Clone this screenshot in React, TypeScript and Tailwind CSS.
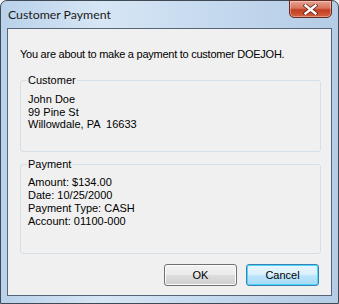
import React from "react";

export default function App() {
  const body = { fontFamily: '"Liberation Sans", Arial, sans-serif' };
  return (
    <div className="w-[339px] h-[304px] overflow-hidden bg-[#f0f0f0]">
      <div className="relative w-[339px] h-[304px] rounded-t-[7px] border border-[#3f4a55] bg-[linear-gradient(90deg,#b9d1ea_0%,#d7e6f5_30%,#c9dcf0_55%,#b4cce6_100%)] flex flex-col">
        {/* title bar */}
        <div className="h-[27px] flex items-center pl-[7px] pt-[2px]">
          <span
            className="text-[12.3px] text-[#1a1a1a] leading-none"
            style={{ fontFamily: 'Lato, "Noto Sans", sans-serif' }}
          >
            Customer Payment
          </span>
        </div>
        {/* close button */}
        <div className="absolute top-[-1px] right-[6px] w-[43px] h-[18px] rounded-b-[5px] border border-[#6b2a1f] bg-[linear-gradient(180deg,#e8a493_0%,#d8735e_45%,#c23e22_55%,#d4603e_100%)] flex items-center justify-center shadow-[inset_0_0_0_1px_rgba(255,255,255,0.35)]">
          <svg width="15" height="11" viewBox="0 0 15 11">
            <path
              d="M2.5 1.5 L12.5 9.5 M12.5 1.5 L2.5 9.5"
              stroke="#5a1a10"
              strokeWidth="3.8"
              strokeLinecap="square"
            />
            <path
              d="M2.5 1.5 L12.5 9.5 M12.5 1.5 L2.5 9.5"
              stroke="#ffffff"
              strokeWidth="2.4"
              strokeLinecap="square"
            />
          </svg>
        </div>
        {/* client area */}
        <div className="mx-[6px] h-[268px] border border-[#55667a] bg-[#f0f0f0] flex flex-col pl-[12px] pr-[10px] text-[11px] text-black" style={body}>
          <p className="mt-[19px] leading-[13px] tracking-[-0.25px]">
            You are about to make a payment to customer DOEJOH.
          </p>
          <fieldset className="mt-[13px] w-[301px] h-[78px] rounded-[3px] border border-[#d5dfe5] px-[7px]">
            <legend className="px-[1px] ml-[-1px] leading-[13px]">Customer</legend>
            <div className="pt-[6px] leading-[12.5px]">
              <div>John Doe</div>
              <div>99 Pine St</div>
              <div className="whitespace-pre">Willowdale, PA  16633</div>
            </div>
          </fieldset>
          <fieldset className="mt-[6px] w-[301px] h-[96px] rounded-[3px] border border-[#d5dfe5] px-[7px]">
            <legend className="px-[1px] ml-[-1px] leading-[13px]">Payment</legend>
            <div className="pt-[5px] leading-[13px]">
              <div>Amount: $134.00</div>
              <div>Date: 10/25/2000</div>
              <div>Payment Type: CASH</div>
              <div>Account: 01100-000</div>
            </div>
          </fieldset>
          <div className="mt-[10px] flex justify-end gap-[9px] pr-[2px]">
            <button className="w-[73px] h-[22px] rounded-[3px] border border-[#707070] bg-[linear-gradient(180deg,#f2f2f2_0%,#ebebeb_48%,#dddddd_52%,#cfcfcf_100%)] text-[11px] text-black shadow-[inset_0_0_0_1px_#fcfcfc]">
              OK
            </button>
            <button className="w-[73px] h-[22px] rounded-[3px] border border-[#3c7fb1] bg-[linear-gradient(180deg,#eaf6fd_0%,#d9f0fc_48%,#bee6fd_52%,#a7d9f5_100%)] text-[11px] text-black shadow-[inset_0_0_0_1px_#48d8fb]">
              Cancel
            </button>
          </div>
        </div>
        <div className="flex-1" />
      </div>
    </div>
  );
}
